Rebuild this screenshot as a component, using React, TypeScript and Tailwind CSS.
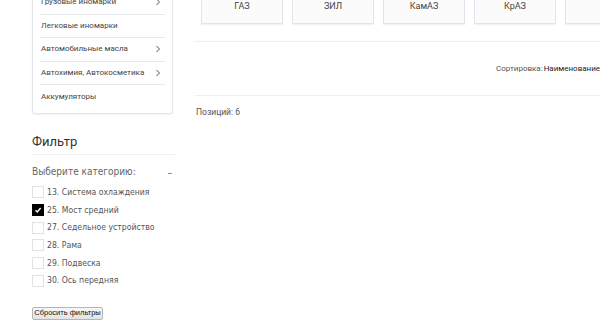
import React from "react";

const menu = [
  { t: "Грузовые иномарки", arrow: true },
  { t: "Легковые иномарки", arrow: false },
  { t: "Автомобильные масла", arrow: true },
  { t: "Автохимия, Автокосметика", arrow: true },
  { t: "Аккумуляторы", arrow: false },
];

const cats = [
  { t: "13. Система охлаждения", c: false },
  { t: "25. Мост средний", c: true },
  { t: "27. Седельное устройство", c: false },
  { t: "28. Рама", c: false },
  { t: "29. Подвеска", c: false },
  { t: "30. Ось передняя", c: false },
];

const brands = ["ГАЗ", "ЗИЛ", "КамАЗ", "КрАЗ", ""];

const verd = { fontFamily: "'DejaVu Sans Condensed', 'DejaVu Sans', Verdana, sans-serif" };

function Chevron() {
  return (
    <svg width="6" height="8" viewBox="0 0 6 8" className="shrink-0">
      <path d="M1.5 1 L4.5 4 L1.5 7" fill="none" stroke="#555" strokeWidth="1" />
    </svg>
  );
}

export default function App() {
  return (
    <div
      className="w-[600px] h-[327px] overflow-hidden bg-white flex"
      style={{ fontFamily: "Roboto, 'Liberation Sans', sans-serif" }}
    >
      {/* Left column */}
      <div className="w-[143px] ml-[32px] shrink-0 flex flex-col">
        <div className="w-[141px] -mt-[9px] border border-[#e4e6ea] border-t-0 rounded-b-[3px] shadow-[0_1px_2px_rgba(0,0,0,0.06)] pb-[4px]">
          {menu.map((m, i) => (
            <div key={i} className="mx-[7px]">
              <div
                className={`h-[23.5px] flex items-center justify-between pl-[1px] pr-[4px] text-[8px] text-[#444] whitespace-nowrap ${
                  i < menu.length - 1 ? "border-b border-[#e8e9ec]" : ""
                }`}
              >
                <span>{m.t}</span>
                {m.arrow && <Chevron />}
              </div>
            </div>
          ))}
        </div>

        <div className="mt-[20px] text-[13px] text-[#333] leading-[16px] pb-[4px] border-b border-[#eeeeee]">
          Фильтр
        </div>

        <div className="mt-[10px] flex items-center justify-between text-[#666]" style={verd}>
          <span className="text-[10px] leading-[14px]">Выберите категорию:</span>
          <span className="text-[10px] pr-[3px]">–</span>
        </div>

        <div className="mt-[4px] flex flex-col" style={verd}>
          {cats.map((c, i) => (
            <div key={i} className="h-[17.7px] flex items-center gap-[3px]">
              <span
                className={`w-[12px] h-[12px] shrink-0 flex items-center justify-center ${
                  c.c ? "bg-black" : "border border-[#e2e2e2] bg-white"
                }`}
              >
                {c.c && (
                  <svg width="8" height="8" viewBox="0 0 8 8">
                    <path d="M1.5 4.2 L3.3 6 L6.6 2" fill="none" stroke="#fff" strokeWidth="1.4" />
                  </svg>
                )}
              </span>
              <span className="text-[8.6px] text-[#555] whitespace-nowrap">{c.t}</span>
            </div>
          ))}
        </div>

        <div className="mt-[17px] flex">
          <button
            className="h-[13px] w-[71px] flex items-center justify-center border border-[#b5b5b5] rounded-[2px] bg-gradient-to-b from-[#f8f8f8] to-[#e3e3e3] text-[7.5px] leading-[10px] text-[#111] whitespace-nowrap"
            style={{ fontFamily: "'Liberation Sans', Arial, sans-serif" }}
          >
            Сбросить фильтры
          </button>
        </div>
      </div>

      {/* Right column */}
      <div className="ml-[20px] w-[470px] shrink-0 flex flex-col">
        <div className="flex gap-[9px] pl-[6px] -mt-[36px]">
          {brands.map((b, i) => (
            <div
              key={i}
              className="w-[82px] h-[60px] shrink-0 border border-[#e3e5ea] bg-[#fbfbfb] shadow-[0_1px_1px_rgba(0,0,0,0.05)] flex items-end justify-center pb-[11px] text-[9px] leading-[12px] text-[#444]"
            >
              {b}
            </div>
          ))}
        </div>

        <div className="mt-[17px] border-t border-[#eeeeee] h-[54px] flex items-center pl-[301px] text-[8px] whitespace-nowrap">
          <span className="text-[#555]">Сортировка:</span>
          <span className="text-[#1a1a2e] ml-[1px]">Наименование ▾</span>
        </div>

        <div className="border-t border-[#eeeeee]">
          <div className="pl-[1px] mt-[10px] text-[8.5px] text-[#555]">Позиций: 6</div>
        </div>
      </div>
    </div>
  );
}
